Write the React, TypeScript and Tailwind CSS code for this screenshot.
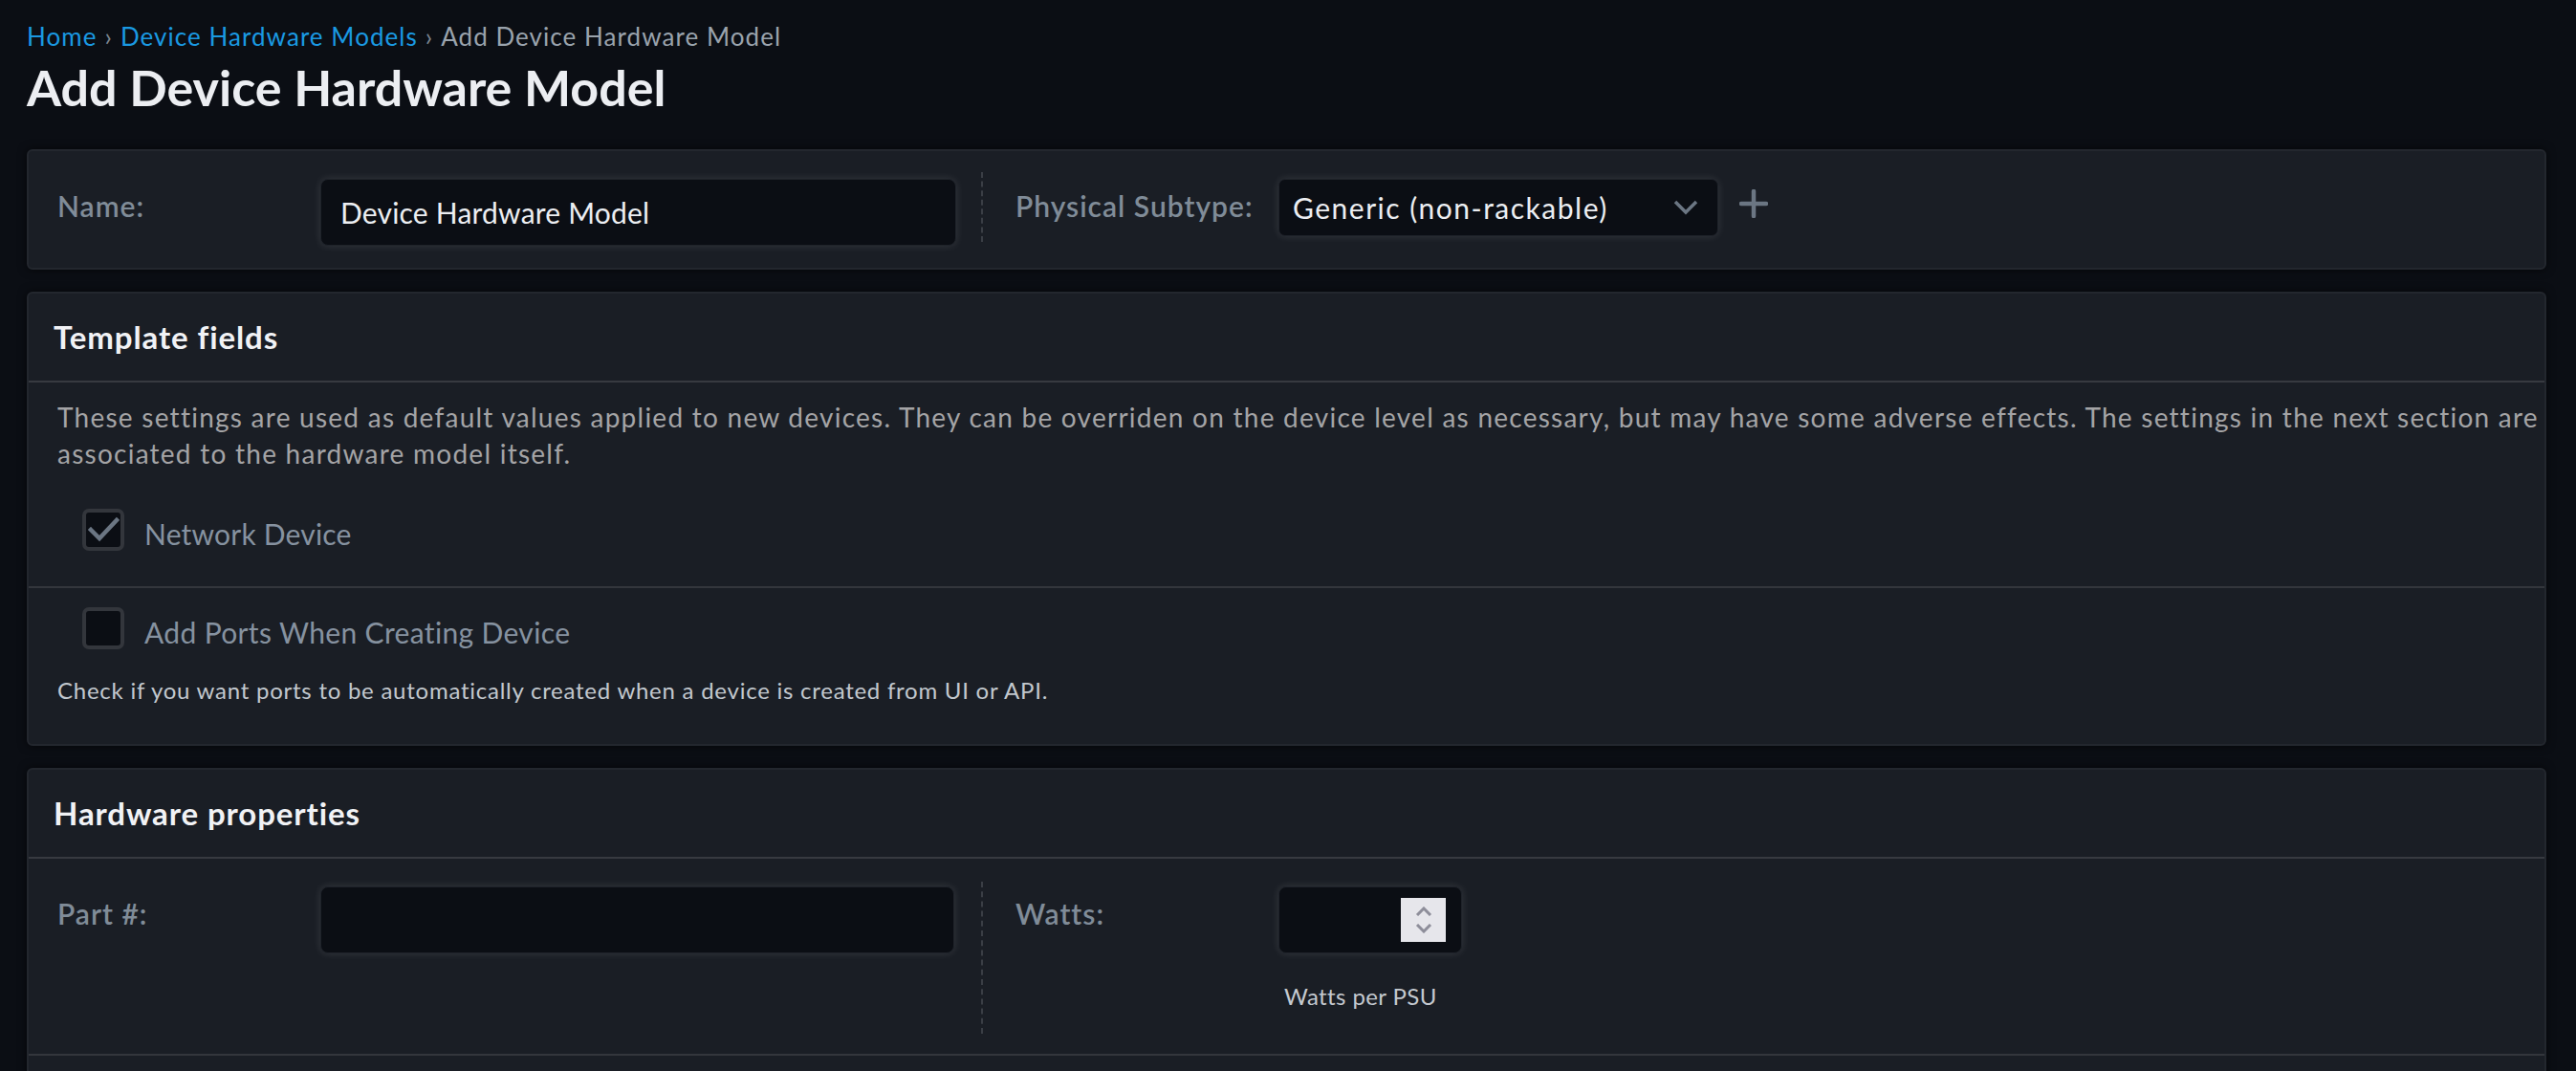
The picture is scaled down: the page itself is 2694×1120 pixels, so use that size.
import React from 'react';

function Card({ children }: { children: React.ReactNode }) {
  return (
    <div className="rounded-[6px] border-2 border-[#23272e] bg-[#1a1e25] shadow-[0_0_10px_rgba(0,0,0,0.6)]">
      {children}
    </div>
  );
}

function CardHeader({ title }: { title: string }) {
  return (
    <div className="flex h-[93px] items-center border-b-2 border-[#373a40] px-[26px]">
      <h2 className="text-[33px] font-bold tracking-[0.9px] text-[#f1f2f5]">{title}</h2>
    </div>
  );
}

function FieldLabel({ children }: { children: React.ReactNode }) {
  return (
    <label className="w-[275px] shrink-0 pt-[10px] text-[30px] font-semibold leading-[36px] tracking-[1px] text-[#808c98]">
      {children}
    </label>
  );
}

function Divider({ height }: { height: string }) {
  return <div className={`w-0 shrink-0 border-l-2 border-dashed border-[#3a3e45] ${height}`} />;
}

function Checkbox({ checked }: { checked?: boolean }) {
  return (
    <div className="flex h-[44px] w-[44px] shrink-0 items-center justify-center rounded-[7px] border-[4px] border-[#33363c] bg-[#0b0e14]">
      {checked && (
        <svg width="34" height="30" viewBox="0 0 34 30" fill="none">
          <path d="M4 15 L13 24 L31 5" stroke="#6b7683" strokeWidth="4.5" strokeLinecap="square" strokeLinejoin="miter" />
        </svg>
      )}
    </div>
  );
}

export default function App() {
  return (
    <div className="min-h-screen bg-[#0b0e14] pl-[28px] pr-[31px] pt-[20px] font-['Lato','Noto_Sans',sans-serif]">
      <nav className="flex items-center text-[26px] leading-[36px] tracking-[1.05px]">
        <a className="text-[#1a99e2]">Home</a>
        <span className="mx-[8px] text-[#7c8691]">›</span>
        <a className="text-[#1a99e2]">Device Hardware Models</a>
        <span className="mx-[8px] text-[#7c8691]">›</span>
        <span className="text-[#9aa3ad]">Add Device Hardware Model</span>
      </nav>
      <h1 className="mt-[4px] text-[52px] font-bold leading-[62px] text-[#eceef2]">Add Device Hardware Model</h1>

      <div className="mt-[34px] flex flex-col gap-[23px]">
        <Card>
          <div className="flex pb-[23px] pt-[22px]">
            <div className="flex w-[996px] shrink-0 pl-[30px] pt-[7px]">
              <FieldLabel>Name:</FieldLabel>
              <input
                defaultValue="Device Hardware Model"
                className="h-[70px] w-[665px] rounded-[8px] border border-[#1f232a] bg-[#0b0e14] px-[20px] text-[30px] tracking-[0.2px] text-[#eceef2] shadow-[0_0_8px_rgba(255,255,255,0.12)] outline-none"
              />
            </div>
            <Divider height="h-[73px]" />
            <div className="flex flex-1 items-start pl-[34px] pt-[7px]">
              <FieldLabel>Physical Subtype:</FieldLabel>
              <div className="flex h-[60px] w-[460px] items-center justify-between rounded-[7px] border border-[#1f232a] bg-[#0b0e14] pl-[14px] pr-[20px] text-[30px] tracking-[1.5px] text-[#eceef2] shadow-[0_0_8px_rgba(255,255,255,0.12)]">
                <span>Generic (non-rackable)</span>
                <svg width="26" height="16" viewBox="0 0 26 16" fill="none">
                  <path d="M2 2 L13 13 L24 2" stroke="#6b7683" strokeWidth="3.5" />
                </svg>
              </div>
              <svg className="ml-[22px] mt-[11px]" width="30" height="30" viewBox="0 0 30 30" fill="none">
                <path d="M15 2 V28 M2 15 H28" stroke="#6b7683" strokeWidth="4.5" strokeLinecap="round" />
              </svg>
            </div>
          </div>
        </Card>

        <Card>
          <CardHeader title="Template fields" />
          <p className="pl-[30px] pr-[2px] pt-[17px] text-[28px] leading-[38px] tracking-[1.25px] text-[#a4a4a6]">
            These settings are used as default values applied to new devices. They can be overriden on the device level as necessary, but may have some adverse effects. The settings in the next section are associated to the hardware model itself.
          </p>
          <div className="flex items-center gap-[21px] pb-[37px] pl-[56px] pt-[39px]">
            <Checkbox checked />
            <span className="pt-[8px] text-[30px] leading-[36px] tracking-[0.2px] text-[#8692a0]">Network Device</span>
          </div>
          <div className="border-t-2 border-[#33363c]" />
          <div className="flex items-center gap-[21px] pl-[56px] pt-[20px]">
            <Checkbox />
            <span className="pt-[8px] text-[30px] leading-[36px] tracking-[0.35px] text-[#8692a0]">Add Ports When Creating Device</span>
          </div>
          <p className="pb-[40px] pl-[30px] pt-[27px] text-[24px] leading-[32px] tracking-[0.75px] text-[#c2c8ce]">
            Check if you want ports to be automatically created when a device is created from UI or API.
          </p>
        </Card>

        <Card>
          <CardHeader title="Hardware properties" />
          <div className="flex border-b-2 border-[#33363c] pb-[21px] pt-[24px]">
            <div className="flex w-[996px] shrink-0 items-start pl-[30px] pt-[5px]">
              <FieldLabel>Part #:</FieldLabel>
              <input className="h-[70px] w-[663px] rounded-[8px] border border-[#1f232a] bg-[#0b0e14] px-[20px] text-[30px] text-[#eceef2] shadow-[0_0_8px_rgba(255,255,255,0.12)] outline-none" />
            </div>
            <Divider height="h-[159px]" />
            <div className="flex flex-1 items-start pl-[34px] pt-[5px]">
              <FieldLabel>Watts:</FieldLabel>
              <div className="flex flex-col">
                <div className="flex h-[70px] w-[192px] items-center justify-end rounded-[8px] border border-[#1f232a] bg-[#0b0e14] pr-[16px] shadow-[0_0_8px_rgba(255,255,255,0.12)]">
                  <div className="flex h-[46px] w-[47px] flex-col items-center justify-center gap-[8px] bg-[#e6e6eb]">
                    <svg width="18" height="10" viewBox="0 0 18 10" fill="none">
                      <path d="M2 9 L9 2 L16 9" stroke="#8e8e9a" strokeWidth="3" />
                    </svg>
                    <svg width="18" height="10" viewBox="0 0 18 10" fill="none">
                      <path d="M2 1 L9 8 L16 1" stroke="#8e8e9a" strokeWidth="3" />
                    </svg>
                  </div>
                </div>
                <span className="mt-[29px] pl-[6px] text-[24px] leading-[32px] tracking-[0.4px] text-[#c4c9cf]">Watts per PSU</span>
              </div>
            </div>
          </div>
          <div className="h-[160px]" />
        </Card>
      </div>
    </div>
  );
}
